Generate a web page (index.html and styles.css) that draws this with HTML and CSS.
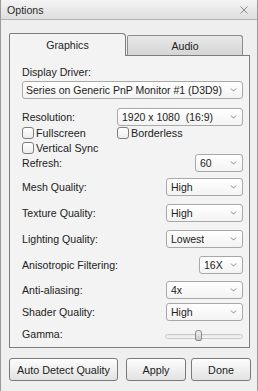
FILE: index.html
```html
<!DOCTYPE html>
<html>
<head>
<meta charset="utf-8">
<title>Options</title>
<link rel="stylesheet" href="styles.css">
</head>
<body>
<div class="window">
  <div class="titlebar">
    <span class="title">Options</span>
    <svg class="close" width="8" height="8" viewBox="0 0 8 8"><path d="M0.5 0.5L7.5 7.5M7.5 0.5L0.5 7.5" stroke="#8c8c8c" stroke-width="1"/></svg>
  </div>
  <div class="content">
    <div class="tabs">
      <div class="tab active">Graphics</div>
      <div class="tab">Audio</div>
    </div>
    <div class="panel">
      <div class="label-top">Display Driver:</div>
      <div class="select driver"><span class="val">Series on Generic PnP Monitor #1 (D3D9)</span><svg class="arrow" width="7" height="4" viewBox="0 0 7 4"><path d="M0 0.5L3.5 3.5L7 0.5L5.8 0.5L3.5 2.3L1.2 0.5Z" fill="#a0a0a0"/></svg></div>

      <div class="row r-res"><span class="label">Resolution:</span><div class="select w-res"><span class="val">1920 x 1080&nbsp;&nbsp;(16:9)</span><svg class="arrow" width="7" height="4" viewBox="0 0 7 4"><path d="M0 0.5L3.5 3.5L7 0.5L5.8 0.5L3.5 2.3L1.2 0.5Z" fill="#a0a0a0"/></svg></div></div>

      <div class="cb-row cb1"><label class="check w-cb"><span class="box"></span>Fullscreen</label><label class="check"><span class="box"></span>Borderless</label></div>
      <div class="cb-row cb2"><label class="check"><span class="box"></span>Vertical Sync</label></div>

      <div class="row r-refresh"><span class="label">Refresh:</span><div class="select w-refresh"><span class="val">60</span><svg class="arrow" width="7" height="4" viewBox="0 0 7 4"><path d="M0 0.5L3.5 3.5L7 0.5L5.8 0.5L3.5 2.3L1.2 0.5Z" fill="#a0a0a0"/></svg></div></div>

      <div class="row r-mesh"><span class="label">Mesh Quality:</span><div class="select w-q"><span class="val">High</span><svg class="arrow" width="7" height="4" viewBox="0 0 7 4"><path d="M0 0.5L3.5 3.5L7 0.5L5.8 0.5L3.5 2.3L1.2 0.5Z" fill="#a0a0a0"/></svg></div></div>

      <div class="row r-8"><span class="label">Texture Quality:</span><div class="select w-q"><span class="val">High</span><svg class="arrow" width="7" height="4" viewBox="0 0 7 4"><path d="M0 0.5L3.5 3.5L7 0.5L5.8 0.5L3.5 2.3L1.2 0.5Z" fill="#a0a0a0"/></svg></div></div>

      <div class="row r-8"><span class="label">Lighting Quality:</span><div class="select w-q"><span class="val">Lowest</span><svg class="arrow" width="7" height="4" viewBox="0 0 7 4"><path d="M0 0.5L3.5 3.5L7 0.5L5.8 0.5L3.5 2.3L1.2 0.5Z" fill="#a0a0a0"/></svg></div></div>

      <div class="row r-8"><span class="label">Anisotropic Filtering:</span><div class="select w-aniso"><span class="val">16X</span><svg class="arrow" width="7" height="4" viewBox="0 0 7 4"><path d="M0 0.5L3.5 3.5L7 0.5L5.8 0.5L3.5 2.3L1.2 0.5Z" fill="#a0a0a0"/></svg></div></div>

      <div class="row r-7"><span class="label">Anti-aliasing:</span><div class="select w-q"><span class="val">4x</span><svg class="arrow" width="7" height="4" viewBox="0 0 7 4"><path d="M0 0.5L3.5 3.5L7 0.5L5.8 0.5L3.5 2.3L1.2 0.5Z" fill="#a0a0a0"/></svg></div></div>

      <div class="row r-shader"><span class="label">Shader Quality:</span><div class="select w-q"><span class="val">High</span><svg class="arrow" width="7" height="4" viewBox="0 0 7 4"><path d="M0 0.5L3.5 3.5L7 0.5L5.8 0.5L3.5 2.3L1.2 0.5Z" fill="#a0a0a0"/></svg></div></div>

      <div class="row r-gamma"><span class="label">Gamma:</span><div class="slider"><div class="track"></div><div class="thumb"></div></div></div>
    </div>
    <div class="buttons">
      <button class="btn b-auto">Auto Detect Quality</button>
      <button class="btn b-apply">Apply</button>
      <button class="btn b-done">Done</button>
    </div>
  </div>
</div>
</body>
</html>
```
FILE: styles.css
```css
html, body {
  margin: 0;
  padding: 0;
  background: #ececec;
}
body {
  font-family: "Liberation Sans", Arial, sans-serif;
  font-size: 10.6px;
  color: #222;
}
.window {
  width: 258px;
  height: 391px;
  box-sizing: border-box;
  border-left: 1px solid #9a9a9a;
  border-right: 1px solid #9a9a9a;
  background: #efefef;
  overflow: hidden;
}
.titlebar {
  height: 20px;
  box-sizing: border-box;
  border-bottom: 1px solid #b4b4b4;
  background: linear-gradient(#f4f4f4, #dedede);
  display: flex;
  align-items: center;
  justify-content: space-between;
  padding: 1px 9px 0 6px;
}
.title {
  color: #2a2a2a;
}
.close {
  display: block;
}
.content {
  padding: 13px 0 0 8px;
}
.tabs {
  display: flex;
  align-items: flex-end;
  height: 22px;
}
.tab {
  box-sizing: border-box;
  display: flex;
  align-items: center;
  justify-content: center;
  border: 1px solid #8c8c8c;
  border-bottom: none;
}
.tab.active {
  width: 117px;
  height: 23px;
  margin-bottom: -1px;
  background: #f3f3f3;
  border-color: #7c7c7c;
  border-radius: 2px 4px 0 0;
  position: relative;
  z-index: 1;
  padding-bottom: 1px;
}
.tab:not(.active) {
  width: 116px;
  height: 20px;
  margin-left: 1px;
  background: linear-gradient(#e8e8e8, #d5d5d5);
  border-radius: 2px 3px 0 0;
}
.panel {
  width: 241px;
  box-sizing: border-box;
  border: 1px solid #7c7c7c;
  background: #f3f3f3;
  padding: 10px 6px 6px 12px;
}
.label-top {
  line-height: 13px;
}
.select {
  height: 18px;
  box-sizing: border-box;
  border: 1px solid #a8a8a8;
  border-radius: 3px;
  background: linear-gradient(#ffffff, #f3f3f3);
  display: flex;
  align-items: center;
  justify-content: space-between;
  gap: 4px;
  padding: 0 5px 0 4px;
  font-size: 10.5px;
  white-space: nowrap;
}
.val {
  min-width: 0;
  overflow: hidden;
}
.select.driver {
  margin-top: 2px;
  padding-left: 3px;
}
.arrow {
  display: block;
  flex: none;
}
.row {
  display: flex;
  align-items: center;
  justify-content: space-between;
  height: 18px;
}
.r-res { margin-top: 9px; }
.r-refresh { margin-top: 0; }
.r-mesh { margin-top: 6px; }
.r-8 { margin-top: 8px; }
.r-7 { margin-top: 7px; }
.r-shader { margin-top: 4px; }
.r-gamma { margin-top: 6px; height: 14px; }
.w-res { width: 126px; }
.w-refresh { width: 48px; }
.w-q { width: 77px; }
.w-aniso { width: 44px; }
.cb-row {
  display: flex;
  align-items: center;
  height: 12px;
}
.cb1 { margin-top: 1px; }
.cb2 { margin-top: 3px; }
.check {
  display: flex;
  align-items: center;
  gap: 2px;
  font-size: 10.8px;
}
.w-cb { width: 95px; }
.box {
  width: 12px;
  height: 12px;
  box-sizing: border-box;
  border: 1px solid #7e7e7e;
  border-radius: 3px;
  background: linear-gradient(#ffffff, #ececec);
}
.slider {
  width: 78px;
  height: 12px;
  position: relative;
  margin-top: 4px;
}
.track {
  position: absolute;
  left: 0;
  right: 0;
  top: 4px;
  height: 5px;
  box-sizing: border-box;
  border: 1px solid #c8c8c8;
  border-radius: 3px;
  background: linear-gradient(#e6e6e6, #f6f6f6);
}
.thumb {
  position: absolute;
  left: 30px;
  top: 0;
  width: 7px;
  height: 11px;
  box-sizing: border-box;
  border: 1px solid #8a8a8a;
  border-radius: 3px 3px 2px 2px;
  background: linear-gradient(#f2f2f2, #c8c8c8);
}
.buttons {
  display: flex;
  margin-top: 10px;
}
.btn {
  height: 23px;
  box-sizing: border-box;
  border: 1px solid #7a7a7a;
  border-radius: 3px;
  background: linear-gradient(#fdfdfd, #e2e2e2);
  font-family: "Liberation Sans", Arial, sans-serif;
  font-size: 10.8px;
  color: #222;
  padding: 0;
}
.b-auto { width: 109px; }
.b-apply { width: 60px; margin-left: 8px; }
.b-done { width: 60px; margin-left: 5px; }
```
